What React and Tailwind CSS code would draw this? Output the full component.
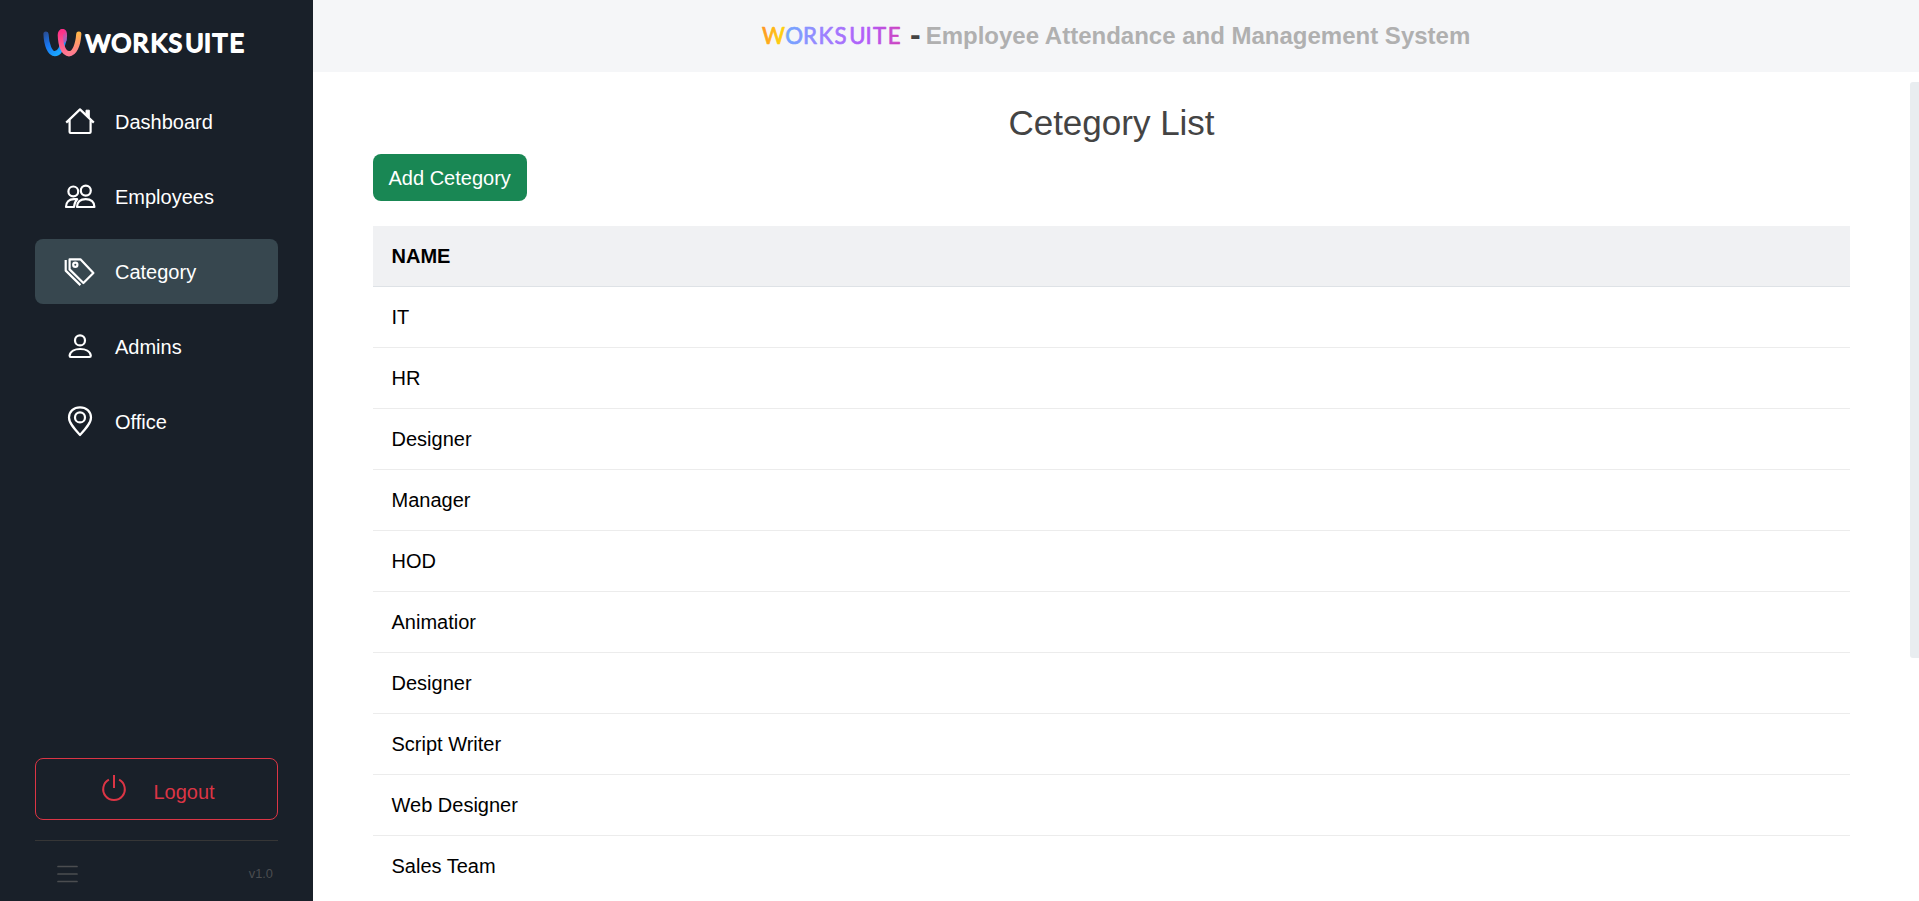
const rows = [
  "IT", "HR", "Designer", "Manager", "HOD", "Animatior",
  "Designer", "Script Writer", "Web Designer", "Sales Team",
];

function Icon({ children }) {
  return (
    <svg
      viewBox="0 0 32 32"
      className="size-8 shrink-0"
      fill="none"
      stroke="currentColor"
      strokeWidth="2.2"
      strokeLinejoin="round"
    >
      {children}
    </svg>
  );
}

const HouseIcon = () => (
  <Icon>
    <path d="M2.2 16.6 16 3.4 29.8 16.6M5.6 13.6V26Q5.6 27 6.6 27H25.6Q26.6 27 26.6 26V13.6" />
    <path d="M22 4.2H25.3V11.5L22 8.3Z" fill="currentColor" strokeWidth="1" />
  </Icon>
);

const PeopleIcon = () => (
  <Icon>
    <circle cx="9.3" cy="10.4" r="4.9" />
    <circle cx="21.8" cy="9.6" r="5" />
    <path d="M13.2 18.2H10C5 18.2 2 21.2 2 26H10C10.3 22.6 11.3 20.1 13.2 18.2Z" />
    <path d="M13 26C13 21 16.4 18.1 21.7 18.1S30.4 21 30.4 26Z" />
  </Icon>
);

const TagsIcon = () => (
  <Icon>
    <path d="M5.6 3.3H16.4L29.4 17 19.4 27 5.6 13.4Z" />
    <path d="M1.7 4V14.6L16.4 29.1" />
    <circle cx="11.3" cy="8.7" r="2.1" />
  </Icon>
);

const PersonIcon = () => (
  <Icon>
    <circle cx="16" cy="9.4" r="5" />
    <path d="M5.6 24.6Q5.6 26 6.8 26H25.6Q26.8 26 26.8 24.6C26.2 20.3 21.5 18 16.2 18S6.2 20.3 5.6 24.6Z" />
  </Icon>
);

const PinIcon = () => (
  <Icon>
    <path d="M16 29C10 22.6 5 17 5 11.6C5 5.4 9.8 1.4 16 1.4S27 5.4 27 11.6C27 17 22 22.6 16 29Z" />
    <circle cx="16" cy="11.4" r="5" />
  </Icon>
);

const items = [
  { label: "Dashboard", icon: HouseIcon },
  { label: "Employees", icon: PeopleIcon },
  { label: "Category", icon: TagsIcon, active: true },
  { label: "Admins", icon: PersonIcon },
  { label: "Office", icon: PinIcon },
];

function Logo() {
  return (
    <svg viewBox="0 0 206 32" className="ml-[42px] mt-[27px] h-8 w-[206px] shrink-0" role="img" aria-label="WORKSUITE">
      <defs>
        <linearGradient id="blue" gradientUnits="userSpaceOnUse" x1="3" y1="4" x2="20" y2="24">
          <stop offset="0" stopColor="#2b4a8c" />
          <stop offset="0.5" stopColor="#1877f2" />
          <stop offset="1" stopColor="#1aa7ff" />
        </linearGradient>
        <linearGradient id="pink" gradientUnits="userSpaceOnUse" x1="0" y1="4" x2="0" y2="27">
          <stop offset="0" stopColor="#ff2d88" />
          <stop offset="1" stopColor="#ff7a92" />
        </linearGradient>
        <linearGradient id="warm" gradientUnits="userSpaceOnUse" x1="0" y1="27" x2="0" y2="5">
          <stop offset="0" stopColor="#ff7a92" />
          <stop offset="1" stopColor="#ffb845" />
        </linearGradient>
        <linearGradient id="fold" gradientUnits="userSpaceOnUse" x1="18" y1="4" x2="24" y2="16">
          <stop offset="0" stopColor="#ff2d88" />
          <stop offset="0.6" stopColor="#c05aac" />
          <stop offset="1" stopColor="#8a68c8" />
        </linearGradient>
      </defs>
      <g fill="none" strokeWidth="5.2" strokeLinecap="round" strokeLinejoin="round">
        <path d="M4 7C4.4 18 8 26.7 12.8 26.7S20.6 19 22 12" stroke="url(#blue)" />
        <path d="M22 13C23 7 22.5 4.7 20.4 4.7" stroke="url(#fold)" />
        <path d="M27 26.7C21.4 26.7 18.6 18 18.3 8C18.3 5.5 19.2 4.7 20.4 4.7" stroke="url(#pink)" />
        <path d="M27 26.7C32.6 26.7 36 18 36.8 7" stroke="url(#warm)" />
      </g>
      <text
        x="43.6 69.2 90.4 108.4 126.4 143.2 162 170.4 187.4" y="25.3"
        fill="#fff" stroke="#fff" strokeWidth="1.8" strokeLinejoin="round"
        className="font-['Lato',sans-serif] text-[25.2px] font-normal"
      >
        <tspan className="text-[24px]">W</tspan>ORKSUITE
      </text>
    </svg>
  );
}

function Sidebar() {
  return (
    <aside className="flex h-full w-[313px] shrink-0 flex-col bg-[#192029]">
      <Logo />
      <nav className="mt-[30px] flex flex-col gap-2.5 px-[35px]">
        {items.map(({ label, icon: Glyph, active }) => (
          <a
            key={label}
            className={
              "flex h-[65px] items-center gap-[19px] rounded-lg pl-[29px] text-xl text-white " +
              (active ? "bg-[#37474f]" : "")
            }
          >
            <Glyph />
            <span>{label}</span>
          </a>
        ))}
      </nav>
      <div className="mt-auto px-[35px]">
        <button className="flex h-[62px] w-full items-center rounded-lg border border-[#dc3545] pl-[63.5px] text-xl text-[#dc3545]">
          <svg viewBox="0 0 28 28" className="size-7 shrink-0" fill="none" stroke="currentColor" strokeWidth="2">
            <path d="M14 0V13M8.9 4.7A10.8 10.8 0 1 0 19.1 4.7" />
          </svg>
          <span className="ml-[26px] mt-1.5">Logout</span>
        </button>
        <div className="mt-5 flex h-[61px] items-center justify-between border-t border-[#363636] pl-[22px] pr-[5px] pt-1.5 text-[#4b4d50]">
          <svg viewBox="0 0 21 20" className="h-5 w-[21px]" stroke="currentColor" strokeWidth="1.7" strokeLinecap="round">
            <path d="M1 2.5H20M1 10H20M1 17.5H20" />
          </svg>
          <span className="text-[12.8px]">v1.0</span>
        </div>
      </div>
    </aside>
  );
}

function Header() {
  return (
    <header className="flex h-[72px] shrink-0 items-center bg-[#f5f6f8] pl-[448px] font-bold">
      <svg viewBox="0 0 142 30" className="h-[30px] w-[142px]" role="img" aria-label="WORKSUITE">
        <defs>
          <linearGradient id="word" x1="0" x2="142" y1="8" y2="20" gradientUnits="userSpaceOnUse">
            <stop offset="0" stopColor="#ff9126" />
            <stop offset="0.14" stopColor="#ffce10" />
            <stop offset="0.165" stopColor="#ffce10" />
            <stop offset="0.185" stopColor="#73a6ff" />
            <stop offset="0.45" stopColor="#9d80ff" />
            <stop offset="0.75" stopColor="#b45cf8" />
            <stop offset="1" stopColor="#cf3fb8" />
          </linearGradient>
        </defs>
        <text
          x="1 24.2 42 57.6 73.4 88.2 104.6 112 126.8" y="22.6"
          fill="url(#word)" stroke="url(#word)" strokeWidth="0.7" strokeLinejoin="round"
          className="font-['Lato',sans-serif] text-[22.2px] font-normal"
        >
          WORKSUITE
        </text>
      </svg>
      <span className="mb-[5px] ml-[7px] text-[32px] leading-8 text-[#444]">-</span>
      <span className="ml-[5px] whitespace-nowrap text-2xl text-[#b0b0b0]">
        Employee Attendance and Management System
      </span>
    </header>
  );
}

export default function App() {
  return (
    <div className="flex h-[901px] w-full overflow-hidden bg-white font-['Liberation_Sans',Arial,sans-serif]">
      <Sidebar />
      <div className="flex min-w-0 flex-1 flex-col">
        <Header />
        <div className="flex min-h-0 flex-1">
          <main className="min-w-0 flex-1 overflow-hidden px-[60px]">
            <h1 className="mt-[30px] text-center text-[35px] leading-[42px] text-[#444]">Cetegory List</h1>
            <button className="mt-[10px] block h-[47px] w-[154px] rounded-lg bg-[#198754] pl-[15.5px] text-left text-xl text-white">
              Add Cetegory
            </button>
            <table className="mt-[25px] w-full border-separate border-spacing-0 text-left text-xl leading-[30px] text-black">
              <thead>
                <tr className="bg-[#f0f1f3]">
                  <th className="h-[61px] border-b border-[#dee2e6] px-[18.5px] py-0 font-bold">NAME</th>
                </tr>
              </thead>
              <tbody>
                {rows.map((name, i) => (
                  <tr key={i} className="group">
                    <td className="h-[61px] border-b border-[#ececec] px-[18.5px] py-0 group-last:border-transparent">{name}</td>
                  </tr>
                ))}
              </tbody>
            </table>
          </main>
          <div className="w-[9px] shrink-0 pt-[10px]">
            <div className="h-[576px] rounded-l-[3px] bg-[#e9edf0]" />
          </div>
        </div>
      </div>
    </div>
  );
}
